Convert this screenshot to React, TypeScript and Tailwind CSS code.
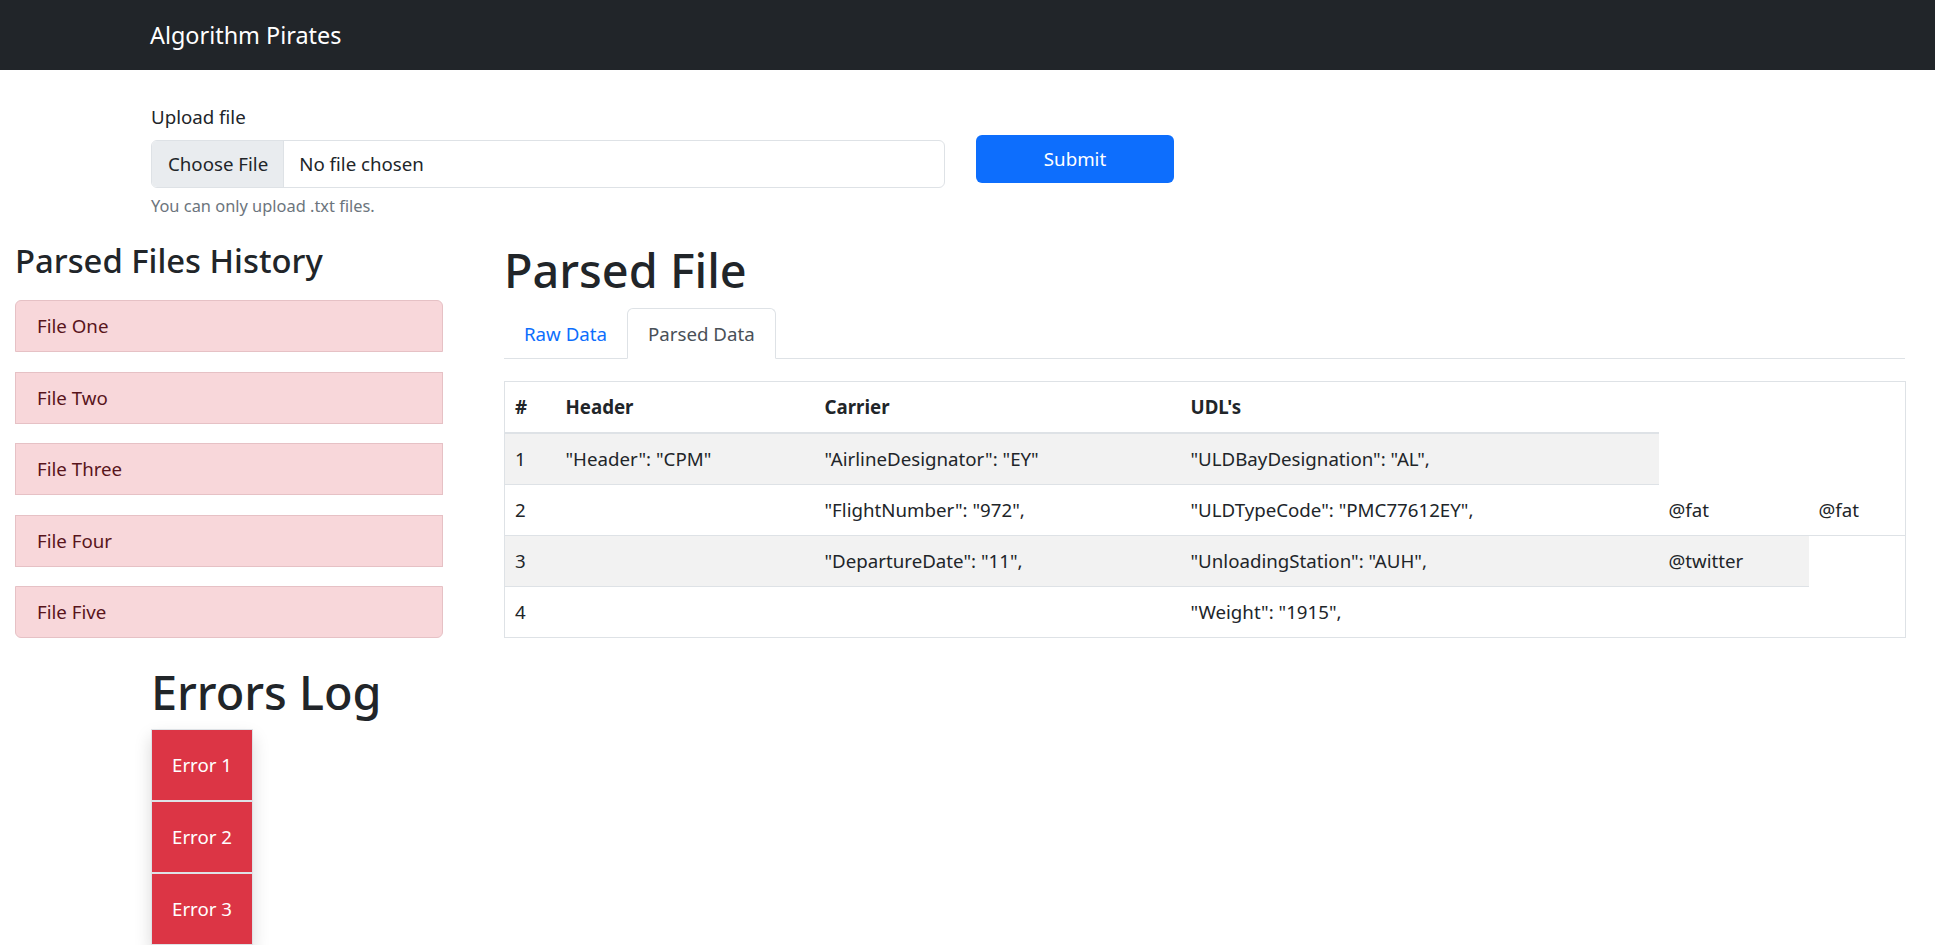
const files = ['File One', 'File Two', 'File Three', 'File Four', 'File Five'];
const errors = ['Error 1', 'Error 2', 'Error 3'];

const rows: string[][] = [
  ['1', '"Header": "CPM"', '"AirlineDesignator": "EY"', '"ULDBayDesignation": "AL",'],
  ['2', '', '"FlightNumber": "972",', '"ULDTypeCode": "PMC77612EY",', '@fat', '@fat'],
  ['3', '', '"DepartureDate": "11",', '"UnloadingStation": "AUH",', '@twitter'],
  ['4', '', '', '"Weight": "1915",'],
];

export default function App() {
  return (
    <div className="min-h-[945px] bg-white text-[18.7px] leading-[30px] text-[#212529] font-['Noto_Sans',sans-serif]">
      {/* Navbar */}
      <nav className="h-[70px] bg-[#212529] flex items-center pl-[150px]">
        <span className="text-[23.4px] leading-[37px] text-white">Algorithm Pirates</span>
      </nav>

      {/* Upload */}
      <form className="flex items-start pl-[151px] pt-[32px]">
        <div className="w-[794px]">
          <label className="block h-[30px]">Upload file</label>
          <div className="mt-[8px] flex h-[48px] rounded-[6px] border border-[#dee2e6] overflow-hidden">
            <span className="flex items-center pl-[16px] pr-[15px] bg-[#e9ecef] border-r border-[#dee2e6]">Choose File</span>
            <span className="flex items-center pl-[15px]">No file chosen</span>
          </div>
          <div className="mt-[5px] text-[16.4px] leading-[26px] text-[#6c757d]">You can only upload .txt files.</div>
        </div>
        <button type="button" className="ml-[31px] mt-[33px] w-[198px] h-[48px] rounded-[6px] bg-[#0d6efd] text-white">
          Submit
        </button>
      </form>

      {/* Main row */}
      <div className="flex mt-[19px]">
        <div className="w-[489px] pl-[15px]">
          <h3 className="text-[32.8px] leading-[42px] font-medium h-[42px] pt-[2px]">Parsed Files History</h3>
          <ul className="mt-[20px] w-[428px] flex flex-col gap-[19.5px]">
            {files.map((f, i) => (
              <li
                key={f}
                className={
                  'h-[52px] flex items-center px-[21px] bg-[#f8d7da] text-[#58151c] border border-[#e6c1c5] ' +
                  (i === 0 ? 'rounded-t-[6px]' : i === files.length - 1 ? 'rounded-b-[6px]' : '')
                }
              >
                {f}
              </li>
            ))}
          </ul>
        </div>

        <div className="w-[1416px] pl-[15px]">
          <h1 className="text-[46.8px] leading-[60px] font-medium h-[60px] pt-[2px]">Parsed File</h1>
          <div className="mt-[10px] flex border-b border-[#dee2e6] h-[51px]">
            <button type="button" className="px-[20px] h-[51px] text-[#0d6efd]">Raw Data</button>
            <button
              type="button"
              className="px-[20px] h-[51px] text-[#495057] bg-white border border-[#dee2e6] border-b-white rounded-t-[6px]"
            >
              Parsed Data
            </button>
          </div>

          <table className="mt-[22px] w-[1401px] table-fixed border-collapse border border-[#dee2e6]">
            <colgroup>
              <col className="w-[51px]" />
              <col className="w-[259px]" />
              <col className="w-[366px]" />
              <col className="w-[478px]" />
              <col className="w-[150px]" />
              <col className="w-[97px]" />
            </colgroup>
            <thead>
              <tr>
                {['#', 'Header', 'Carrier', "UDL's"].map(h => (
                  <th key={h} className="text-left font-bold px-[10px] py-[10px] border-b-2 border-[#dee2e6] whitespace-nowrap">
                    {h}
                  </th>
                ))}
              </tr>
            </thead>
            <tbody>
              {rows.map((r, i) => (
                <tr key={i}>
                  {r.map((c, j) => (
                    <td
                      key={j}
                      className={
                        'px-[10px] py-[10px] border-b border-[#dee2e6] whitespace-nowrap ' +
                        (i % 2 === 0 ? 'bg-[#f2f2f2]' : 'bg-white')
                      }
                    >
                      {c}
                    </td>
                  ))}
                </tr>
              ))}
            </tbody>
          </table>
        </div>
      </div>

      {/* Errors */}
      <div className="pl-[151px] mt-[22px]">
        <h1 className="text-[46.8px] leading-[60px] font-medium h-[60px] pt-[2px]">Errors Log</h1>
        <ul className="mt-[9px] inline-flex flex-col shadow-[0_8px_16px_rgba(0,0,0,0.15)]">
          {errors.map(e => (
            <li key={e} className="px-[20px] py-[20px] bg-[#dc3545] text-white border border-[#dee2e6] h-[72px] leading-[30px]">
              {e}
            </li>
          ))}
        </ul>
      </div>
    </div>
  );
}
